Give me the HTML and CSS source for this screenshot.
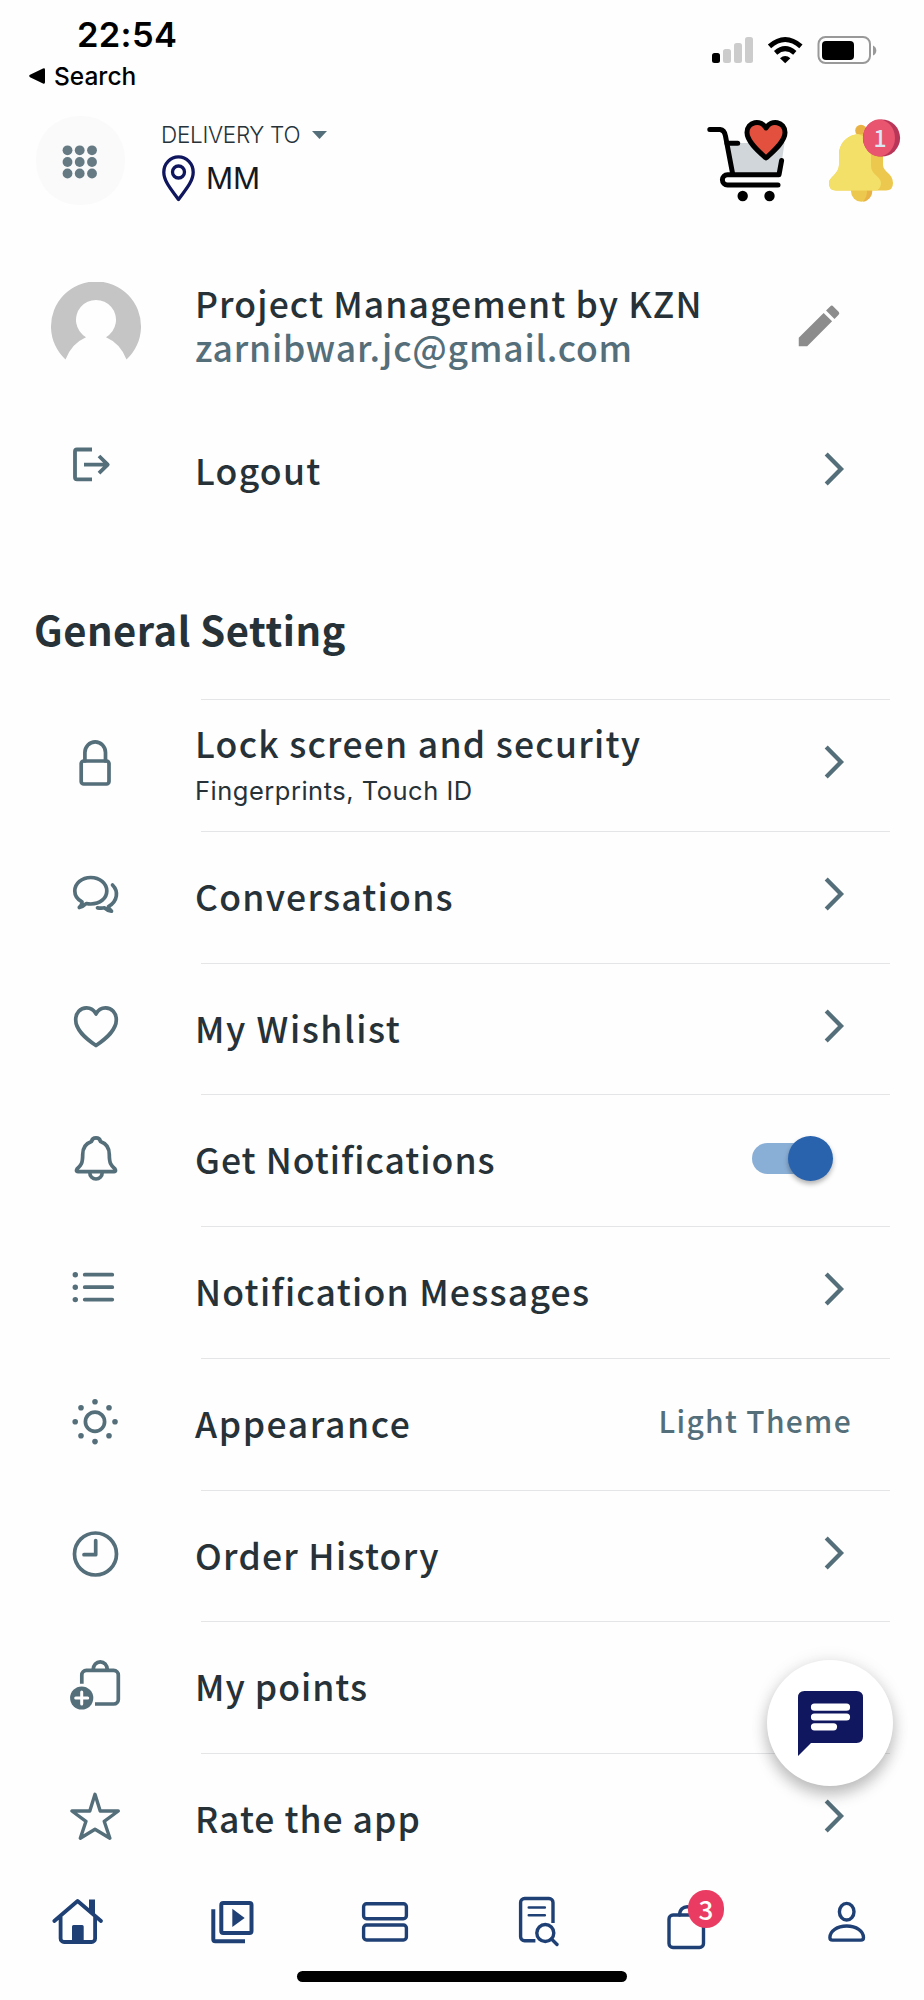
FILE: index.html
```html
<!DOCTYPE html>
<html lang="en">
<head>
    <meta charset="UTF-8">
    <title>Settings</title>
    <link rel="stylesheet" href="styles.css">
</head>
<body>
<div class="screen">
    <div class="status">
        <div class="status-left">
            <div class="time">22:54</div>
            <div class="back">
                <svg width="17" height="16" viewBox="0 0 17 16"><path d="M1 6.8 14 .6q2-.8 2 1.2v12.4q0 2-2 1.2L1 9.2q-1.6-1.2 0-2.4z"/></svg>
                <span>Search</span>
            </div>
        </div>
        <svg class="status-icons" width="168" height="30" viewBox="710 35 168 30">
            <rect x="712" y="53" width="8" height="10" rx="2.5"/>
            <g fill="#ccc">
                <rect x="723" y="49" width="8" height="14" rx="2.5"/>
                <rect x="734" y="43" width="8" height="20" rx="2.5"/>
                <rect x="745" y="37" width="8" height="26" rx="2.5"/>
            </g>
            <g fill="none" stroke="#000" stroke-width="5">
                <path d="M769.5 46.3q15.7-13.6 31.4 0"/>
                <path d="M775.6 52.8q9.6-8.2 19.2 0"/>
            </g>
            <path d="M780 58.3q5.2-4.6 10.4 0l-5.2 5z"/>
            <rect x="818.5" y="37" width="51.5" height="26" rx="7" fill="none" stroke="#999" stroke-width="2"/>
            <rect x="822" y="41" width="32" height="19" rx="4"/>
            <path d="M873 45.5q3.3 1.5 3.3 5t-3.3 5z" fill="#999"/>
        </svg>
    </div>

    <div class="topbar">
        <div class="menu-btn">
            <svg width="36" height="34" viewBox="0 0 36 34">
                <circle cx="5.5" cy="5.3" r="4.9"/><circle cx="17.7" cy="5.3" r="4.9"/><circle cx="30" cy="5.3" r="4.9"/>
                <circle cx="5.5" cy="17" r="4.9"/><circle cx="17.7" cy="17" r="4.9"/><circle cx="30" cy="17" r="4.9"/>
                <circle cx="5.5" cy="28.5" r="4.9"/><circle cx="17.7" cy="28.5" r="4.9"/><circle cx="30" cy="28.5" r="4.9"/>
            </svg>
        </div>
        <div class="delivery">
            <div class="delivery-label">
                <span>DELIVERY TO</span>
                <svg width="15" height="8" viewBox="0 0 15 8"><path d="M0 0h15L7.5 8z"/></svg>
            </div>
            <div class="place">
                <svg width="33" height="47" viewBox="0 0 33 47" fill="none" stroke="#0f165e" stroke-width="3.3">
                    <path d="M16.5 44.5C11 36.5 1.8 27 1.8 17.2a14.7 15.3 0 0 1 29.4 0C31.2 27 22 36.5 16.5 44.5z" stroke-linejoin="round"/>
                    <circle cx="16.5" cy="17" r="6"/>
                </svg>
                <span>MM</span>
            </div>
        </div>
        <svg class="cart" width="84" height="86" viewBox="706 118 84 86" fill="none" stroke="#000" stroke-width="5" stroke-linecap="round" stroke-linejoin="round">
            <path d="M729 143h55.5L780 174h-47z" fill="#d0d6da" stroke="none"/>
            <path d="M709.8 129.6H720q4.5.6 5.5 6.5l7.2 38"/>
            <path d="M727 143.3h10.7M781.6 160.5l-2.6 14.2h-51.5a5.1 5.1 0 0 0 0 10.2H778"/>
            <path d="M766 158c-6-5.5-19-16-19-25.5 0-11 14-13.5 19-4.5 5-9 19-6.5 19 4.5 0 9.5-13 20-19 25.5z" fill="#e3513e"/>
            <g fill="#000" stroke="none"><circle cx="742.7" cy="196" r="5.2"/><circle cx="769.5" cy="196" r="5.2"/></g>
        </svg>
        <svg class="bell" width="74" height="86" viewBox="828 118 74 86">
            <circle cx="861.3" cy="191.5" r="10.3" fill="#edc84e"/>
            <path d="M863 181.2a10.3 10.3 0 0 1 0 20.5q8-10 0-20.5z" fill="#e8b344"/>
            <circle cx="861" cy="130.5" r="5.8" fill="#e8b344"/>
            <path d="M861 134c13 0 22 9 22 21v10c0 7 10 8 10 18q0 7.5-7 7.5h-50q-7 0-7-7.5c0-6 10-9 10-18v-10c0-12 9-21 22-21z" fill="#edc84e"/>
            <path d="M858 134q13 4 13 21v11c0 9 10 10 10 17 0 3-1 5-4 7.5h-41q-7 0-7-7.5c0-6 10-9 10-18v-10c0-12 8-20 19-21z" fill="#f3e068"/>
            <circle cx="881.5" cy="138" r="18.6" fill="#b83658"/>
            <ellipse cx="879" cy="138" rx="16" ry="18.5" fill="#e9546e"/>
            <text x="880" y="146.5" class="bell-count">1</text>
        </svg>
    </div>

    <div class="profile">
        <svg class="avatar" width="90" height="90" viewBox="0 0 90 90">
            <path d="M14.5 77.5a45 45 0 1 1 61 0q-6-16-20.5-22.3a20 20 0 1 0-20 0Q20.5 61.5 14.5 77.5z" fill="#c5c5c5"/>
        </svg>
        <div class="profile-text">
            <div class="name">Project Management by KZN</div>
            <div class="email">zarnibwar.jc@gmail.com</div>
        </div>
        <svg class="edit" width="54" height="54" viewBox="0 0 24 24"><path d="M3 17.25V21h3.75L17.81 9.94l-3.75-3.75L3 17.25zM20.71 7.04a1 1 0 0 0 0-1.41l-2.34-2.34a1 1 0 0 0-1.41 0l-1.83 1.83 3.75 3.75 1.83-1.83z"/></svg>
    </div>

    <div class="row logout">
        <svg class="icon" viewBox="0 0 60 60" stroke-width="3.8"><path d="M27 9.5H12a2 2 0 0 0-2 2v25.8a2 2 0 0 0 2 2h15M19 24.6h24M34 16l8.7 8.6L34 33.2" stroke-linecap="butt"/></svg>
        <div class="label">Logout</div>
        <svg class="chevron" viewBox="0 0 22 36"><path d="M3.2 3 18 18 3.2 33"/></svg>
    </div>

    <h2>General Setting</h2>

    <div class="list">
        <div class="row">
            <svg class="icon" viewBox="0 0 60 60"><rect x="16.2" y="28" width="27.8" height="23" rx="2.5"/><path d="M19.9 28v-8.5a10.3 10.7 0 0 1 20.6 0V28"/></svg>
            <div class="label two">Lock screen and security<small>Fingerprints, Touch ID</small></div>
            <svg class="chevron" viewBox="0 0 22 36"><path d="M3.2 3 18 18 3.2 33"/></svg>
        </div>
        <div class="row">
            <svg class="icon" viewBox="0 0 60 60"><path d="M17 36.8C12.5 34.5 9.8 30.5 9.8 26c0-7.5 7-13.5 16-13.5s16 6 16 13.5-7 13-16 13q-2.5 0-4.5-.5-3 3-7 4 3-2.5 2.7-5.7zM47.5 20c6 6 5.5 16-4 21.5q.5 2.5 3 4.7-4.5-1-7-3.4-3 .5-7 0"/></svg>
            <div class="label">Conversations</div>
            <svg class="chevron" viewBox="0 0 22 36"><path d="M3.2 3 18 18 3.2 33"/></svg>
        </div>
        <div class="row">
            <svg class="icon" viewBox="0 0 60 60"><path d="M31 48.5C20 41 10.7 33 10.7 22.8c0-7 4.5-11.9 10.8-11.9 4.2 0 7.5 2.3 9.5 6.1 2-3.8 5.3-6.1 9.5-6.1 6.3 0 10.8 4.9 10.8 11.9C51.3 33 42 41 31 48.5z"/></svg>
            <div class="label loose">My Wishlist</div>
            <svg class="chevron" viewBox="0 0 22 36"><path d="M3.2 3 18 18 3.2 33"/></svg>
        </div>
        <div class="row">
            <svg class="icon" viewBox="0 0 60 60"><path d="M26.5 13.5a4.6 4.6 0 0 1 9 0c6 2 8.8 7 8.8 13 0 9 1.7 11 5.7 14.5q1.5 2.5-1 2.7H13q-2.5-.2-1-2.7c4-3.5 5.7-5.5 5.7-14.5 0-6 2.8-11 8.8-13zM24.7 44c0 9.3 12.6 9.3 12.6 0"/></svg>
            <div class="label tight">Get Notifications</div>
            <div class="toggle"><span></span></div>
        </div>
        <div class="row">
            <svg class="icon" viewBox="0 0 60 60"><path d="M19.7 14.7h27.6M19.7 27.2h27.6M19.7 39.6h27.6"/><g class="solid"><circle cx="10.3" cy="14.7" r="2.7"/><circle cx="10.3" cy="27.2" r="2.7"/><circle cx="10.3" cy="39.6" r="2.7"/></g></svg>
            <div class="label">Notification Messages</div>
            <svg class="chevron" viewBox="0 0 22 36"><path d="M3.2 3 18 18 3.2 33"/></svg>
        </div>
        <div class="row">
            <svg class="icon" viewBox="0 0 60 60"><circle cx="30" cy="29.7" r="9.6"/><g class="solid"><circle cx="30" cy="9.8" r="2.8"/><circle cx="30" cy="49.6" r="2.8"/><circle cx="10.2" cy="29.7" r="2.8"/><circle cx="50" cy="29.7" r="2.8"/><circle cx="16" cy="15.7" r="2.8"/><circle cx="44" cy="15.7" r="2.8"/><circle cx="16" cy="43.7" r="2.8"/><circle cx="44" cy="43.7" r="2.8"/></g></svg>
            <div class="label loose">Appearance</div>
            <div class="value">Light Theme</div>
        </div>
        <div class="row">
            <svg class="icon" viewBox="0 0 60 60"><circle cx="30.5" cy="30" r="21"/><path d="M30.7 16.5v14.2H19"/></svg>
            <div class="label">Order History</div>
            <svg class="chevron" viewBox="0 0 22 36"><path d="M3.2 3 18 18 3.2 33"/></svg>
        </div>
        <div class="row">
            <svg class="icon" viewBox="0 0 60 60"><path d="M16.8 28.7V20a4.6 4.6 0 0 1 4.6-4.6h27.3a4.6 4.6 0 0 1 4.6 4.6v24.4a4.6 4.6 0 0 1-4.6 4.6H30M28 15.4c0-11.5 14.5-11.5 14.5 0" stroke-linecap="butt"/><circle class="solid" cx="16.7" cy="43" r="11.6"/><path d="M16.7 37v12M10.7 43h12" stroke="#fff" stroke-width="3"/></svg>
            <div class="label tight">My points</div>
        </div>
        <div class="row">
            <svg class="icon" viewBox="0 0 60 60" stroke-width="3.4"><path d="M30 7.3 35.2 24H53.3L39.2 34.3 44.9 51.2 30 42.2 15.3 51.2 21 34.3 6.9 24H24.8z"/></svg>
            <div class="label tight">Rate the app</div>
            <svg class="chevron" viewBox="0 0 22 36"><path d="M3.2 3 18 18 3.2 33"/></svg>
        </div>
    </div>

    <div class="navbar">
        <div class="nav-item">
            <svg viewBox="0 0 60 60" stroke-width="3.8"><path d="M7.3 28 30.6 8 54 28M13.6 24v21.5a3.5 3.5 0 0 0 3.5 3.5h27.5a3.5 3.5 0 0 0 3.5-3.5V24"/><path class="fill" d="M42 6.5h6v18l-6-5zM25 50V33.5q0-1.5 1.5-1.5h8.7q1.5 0 1.5 1.5V50z"/></svg>
        </div>
        <div class="nav-item">
            <svg viewBox="0 0 60 60" stroke-width="4"><rect x="20.3" y="10" width="30.2" height="30" rx="2"/><path d="M12.3 16.3v30q0 2 2 2H44" stroke-linecap="butt"/><path class="fill" d="M31.3 15.7v18.3L43.7 25z"/></svg>
        </div>
        <div class="nav-item">
            <svg viewBox="0 0 60 60" stroke-width="3.4"><rect x="8.6" y="10.7" width="42.8" height="15" rx="3"/><rect x="8.6" y="32" width="42.8" height="15" rx="3"/></svg>
        </div>
        <div class="nav-item">
            <svg viewBox="0 0 60 60" stroke-width="3.4"><path d="M44 30V9.5a4 4 0 0 0-4-4H15.6a4 4 0 0 0-4 4v34.3a4 4 0 0 0 4 4h10.8" stroke-linecap="butt"/><path d="M19.8 14.5h16M19.8 22.2h16" stroke-width="2.6"/><circle cx="36.3" cy="40" r="8.5"/><path d="m42.5 46 5.5 5.5"/></svg>
        </div>
        <div class="nav-item">
            <svg viewBox="0 0 60 60" stroke-width="3.4"><rect x="6" y="22" width="34.5" height="32.5" rx="4"/><path d="M16.6 22c0-11 15-11 15 0"/></svg>
            <span class="badge">3</span>
        </div>
        <div class="nav-item">
            <svg viewBox="0 0 60 60" stroke-width="3.4"><ellipse cx="29.7" cy="18.7" rx="7.3" ry="8.3"/><path d="M12.9 44.5C13 38 20 33 29.7 33s16.7 5 16.8 11.5q0 2.6-2.6 2.6H15.5q-2.6 0-2.6-2.6z"/></svg>
        </div>
    </div>
    <div class="home-indicator"></div>

    <div class="chat-fab">
        <svg width="65" height="65" viewBox="0 0 65 65">
            <path d="M6.5 0h52q6.5 0 6.5 6.5v39q0 6.5-6.5 6.5H13L0 65V6.5Q0 0 6.5 0z" fill="#11175e"/>
            <path d="M16.5 16.2h32M16.5 26h32M16.5 35.8h19" stroke="#fff" stroke-width="7.2" stroke-linecap="round"/>
        </svg>
    </div>
</div>
</body>
</html>
```
FILE: styles.css
```css
* {
    box-sizing: border-box;
}
body {
    margin: 0;
    background-color: #fefefe;
    color: #263238;
    font-family: "Noto Sans CJK SC", sans-serif;
}
svg {
    display: block;
    flex-shrink: 0;
}
.screen {
    position: relative;
    display: flex;
    flex-direction: column;
    width: 924px;
    height: 2000px;
    overflow: hidden;
}

/* status bar */
.status {
    display: flex;
    justify-content: space-between;
    height: 100px;
    padding: 14px 46px 0 29px;
    color: #000;
    font-family: Inter, sans-serif;
}
.time {
    margin-left: 48px;
    font-size: 34.5px;
    font-weight: 600;
    line-height: 41px;
    letter-spacing: 0.3px;
}
.back {
    display: flex;
    align-items: center;
    gap: 8px;
    margin-top: 6px;
    font-size: 24.5px;
    font-weight: 500;
    line-height: 30px;
}
.status-icons {
    margin-top: 21px;
}

/* top bar */
.topbar {
    display: flex;
    height: 160px;
    padding: 16px 22px 0 36px;
    font-family: Inter, sans-serif;
}
.menu-btn {
    display: flex;
    align-items: center;
    justify-content: center;
    width: 89px;
    height: 89px;
    padding-top: 3px;
    padding-right: 2px;
    border-radius: 43px;
    background-color: #fafafa;
    fill: #667a84;
}
.delivery {
    flex: 1;
    padding-left: 36px;
}
.delivery-label {
    display: flex;
    align-items: center;
    gap: 12px;
    margin-top: 5px;
    font-size: 22.5px;
    font-weight: 300;
    line-height: 28px;
    letter-spacing: -0.3px;
    fill: #546e7a;
}
.place {
    display: flex;
    align-items: center;
    gap: 11px;
    margin-top: 6px;
    padding-left: 1px;
    color: #15191f;
    font-size: 30px;
    line-height: 47px;
}
.cart {
    margin-top: 2px;
}
.bell {
    margin-top: 2px;
    margin-left: 38px;
}
.bell-count {
    fill: #dbe8f2;
    font-family: "Noto Sans CJK SC", sans-serif;
    font-size: 23px;
    font-weight: 500;
    text-anchor: middle;
}

/* profile */
.profile {
    display: flex;
    height: 145.7px;
    padding: 21px 78px 0 51px;
}
.avatar {
    margin-top: 1px;
}
.profile-text {
    flex: 1;
    margin-left: 54px;
    font-size: 35.5px;
    font-weight: 500;
    line-height: 44px;
    letter-spacing: 1.1px;
    white-space: nowrap;
}
.email {
    color: #546e7a;
    letter-spacing: 0.8px;
}
.edit {
    margin-top: 18px;
    fill: #8c8c8c;
}

/* settings rows */
h2 {
    height: 161.6px;
    margin: 0;
    padding: 66px 0 0 34px;
    font-size: 40px;
    font-weight: 700;
    line-height: 52px;
    letter-spacing: 0.5px;
}
.list {
    flex: 1;
    overflow: hidden;
}
.row {
    display: flex;
    align-items: flex-start;
    height: 131.75px;
    padding: 34px 78px 0 65px;
    background: linear-gradient(#e3e5e6, #e3e5e6) no-repeat 201px 0 / 689px 1px;
    stroke-width: 3.7px;
}
.logout {
    flex-shrink: 0;
    background: none;
}
.icon {
    width: 60px;
    height: 60px;
    fill: none;
    stroke: #546e7a;
    stroke-linecap: round;
    stroke-linejoin: round;
}
.solid {
    fill: #546e7a;
    stroke: none;
}
.label {
    flex: 1;
    padding: 8px 0 0 70px;
    font-size: 35.5px;
    font-weight: 500;
    line-height: 44px;
    letter-spacing: 1.25px;
    white-space: nowrap;
}
.list .label {
    padding-top: 9px;
}
.label.tight {
    letter-spacing: 1px;
}
.label.loose {
    letter-spacing: 1.6px;
}
.list .label.two {
    padding-top: 0;
    margin-top: -12px;
}
.label small {
    display: block;
    margin-top: 10px;
    font-family: Inter, sans-serif;
    font-size: 25.5px;
    font-weight: 400;
    line-height: 32px;
    letter-spacing: 0.5px;
}
.chevron {
    width: 22px;
    height: 36px;
    margin: 11px 1px 0 -1px;
    fill: none;
    stroke: #546e7a;
    stroke-width: 4.3px;
}
.toggle {
    width: 75px;
    height: 31px;
    margin: 15px 19px 0 0;
    padding-left: 36px;
    border-radius: 16px;
    background-color: #8aafd6;
}
.toggle span {
    display: block;
    width: 45px;
    height: 45px;
    margin-top: -7px;
    border-radius: 50%;
    background-color: #2963ae;
    box-shadow: 0 3px 5px rgba(0, 0, 0, 0.3);
}
.value {
    margin: 8px -6px 0 0;
    color: #546e7a;
    font-size: 30px;
    font-weight: 500;
    line-height: 40px;
    letter-spacing: 1.3px;
}

/* bottom navigation */
.navbar {
    display: flex;
    height: 106px;
    padding-top: 28px;
}
.nav-item {
    position: relative;
    flex: 1;
}
.nav-item svg {
    width: 60px;
    height: 60px;
    margin: 0 auto;
    fill: none;
    stroke: #1f4075;
    stroke-linecap: round;
    stroke-linejoin: round;
}
.nav-item .fill {
    fill: #1f4075;
    stroke: none;
}
.badge {
    position: absolute;
    top: -3px;
    left: 72px;
    width: 36px;
    height: 38px;
    border-radius: 18px;
    background-color: #ea3c62;
    color: #fff;
    font-size: 26px;
    font-weight: 500;
    line-height: 37px;
    text-align: center;
}
.home-indicator {
    width: 330px;
    height: 11px;
    margin: 0 auto 18px;
    border-radius: 6px;
    background-color: #000;
}
.chat-fab {
    position: absolute;
    top: 1660px;
    left: 767px;
    display: flex;
    align-items: center;
    justify-content: center;
    width: 126px;
    height: 126px;
    border-radius: 50%;
    background-color: #fff;
    box-shadow: 0 9px 15px rgba(0, 0, 0, 0.22), 0 1px 18px rgba(0, 0, 0, 0.1);
}
```
